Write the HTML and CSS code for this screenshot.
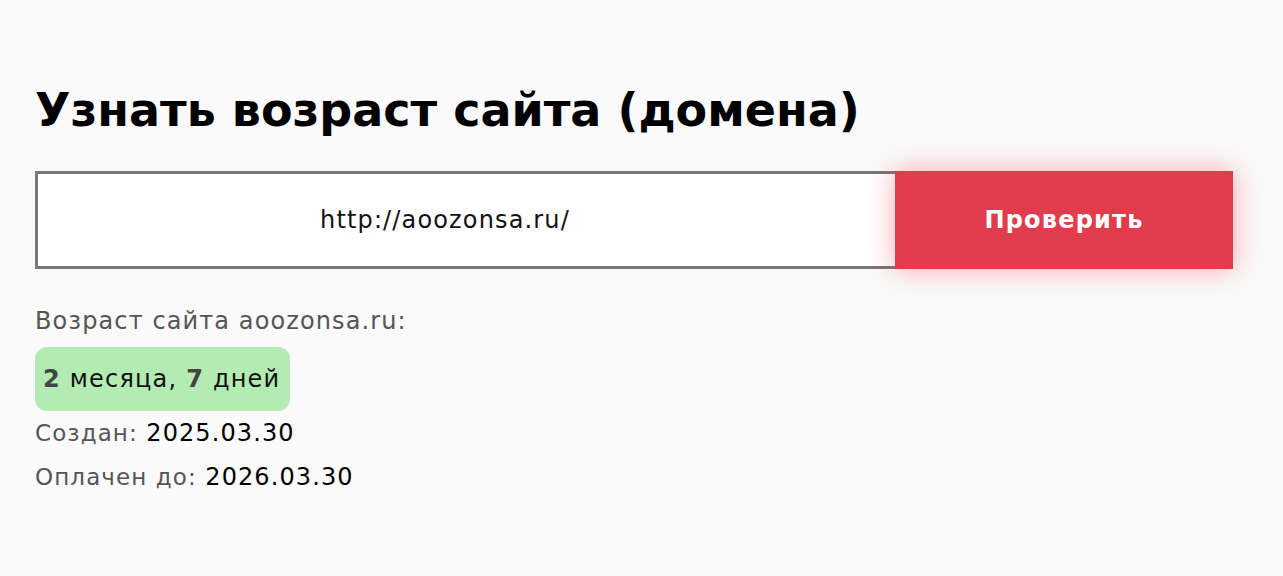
FILE: index.html
```html
<!DOCTYPE html>
<html lang="ru">
<head>
<meta charset="utf-8">
<title>Узнать возраст сайта</title>
<link rel="stylesheet" href="styles.css">
</head>
<body>
<main class="wrap">
  <h1 class="title">Узнать возраст сайта (домена)</h1>
  <form class="check">
    <input class="check-input" type="text" value="http://aoozonsa.ru/">
    <button class="check-btn" type="button">Проверить</button>
  </form>
  <div class="result">
    <div class="result-label">Возраст сайта aoozonsa.ru:</div>
    <div class="age"><b>2</b> месяца, <b>7</b> дней</div>
    <div class="row">Создан: <span class="val">2025.03.30</span></div>
    <div class="row">Оплачен до: <span class="val">2026.03.30</span></div>
  </div>
</main>
</body>
</html>
```
FILE: styles.css
```css
html, body {
  margin: 0;
  padding: 0;
  background: #fafafa;
}
body {
  font-family: "DejaVu Sans", "Inter", sans-serif;
  color: #000;
}
.wrap {
  width: 1198px;
  padding: 80px 0 0 35px;
}
.title {
  margin: 0;
  font-size: 46px;
  font-weight: 700;
  line-height: 60px;
  color: #000;
}
.check {
  display: flex;
  margin-top: 31px;
  height: 98px;
}
.check-input {
  box-sizing: border-box;
  flex: 0 0 860px;
  height: 98px;
  border: 3px solid #777;
  border-right: 0;
  background: #fff;
  font-family: inherit;
  font-size: 24px;
  letter-spacing: 1.15px;
  text-align: center;
  color: #111;
  outline: none;
  padding: 0 43px 0 0;
  margin: 0;
}
.check-btn {
  flex: 0 0 338px;
  height: 98px;
  border: 0;
  margin: 0;
  background: #e03c4b;
  color: #fff;
  font-family: inherit;
  font-size: 24px;
  font-weight: 700;
  letter-spacing: 1.2px;
  box-shadow: 0 0 26px rgba(255, 60, 70, 0.45);
  cursor: pointer;
}
.result {
  margin-top: 36px;
  font-size: 23px;
  letter-spacing: 1.1px;
  color: #555;
}
.result-label {
  font-size: 24px;
  line-height: 32px;
}
.age {
  display: inline-block;
  margin-top: 10px;
  padding: 0 10px 0 8px;
  height: 64px;
  line-height: 64px;
  border-radius: 12px;
  background: #b3ebb3;
  color: #111;
  font-size: 24px;
  letter-spacing: 1.2px;
}
.age b {
  color: #444;
}
.row {
  line-height: 44px;
}
.val {
  color: #000;
  font-size: 24px;
}
```
